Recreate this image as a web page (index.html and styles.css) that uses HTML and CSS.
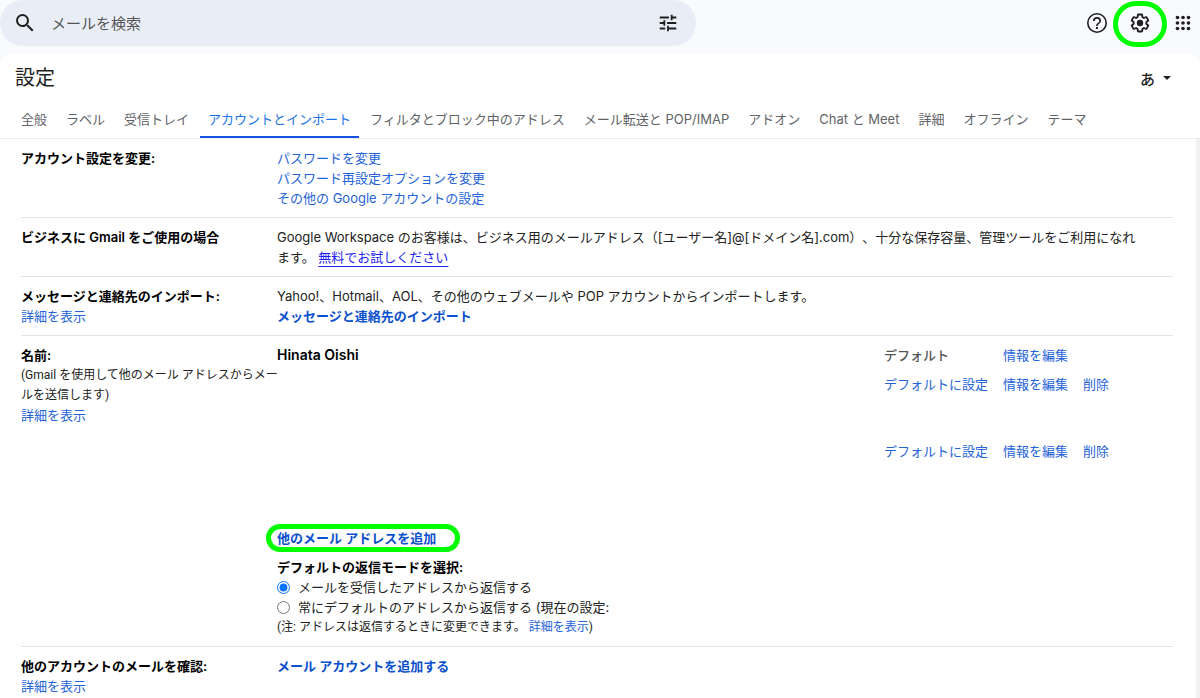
FILE: index.html
```
<!DOCTYPE html>
<html lang="ja">
<head>
  <meta charset="UTF-8" />
  <meta name="viewport" content="width=device-width, initial-scale=1.0"/>
  <title>設定 - アカウントとインポート</title>
  <link rel="stylesheet" href="styles.css">
</head>
<body>

  <!-- Top bar -->
  <header class="topbar">
    <form class="search" role="search">
      <button type="submit" class="icon-btn" aria-label="検索">
        <svg width="24" height="24" viewBox="0 0 24 24"><path d="M15.5 14h-.79l-.28-.27A6.47 6.47 0 0 0 16 9.5 6.5 6.5 0 1 0 9.5 16c1.61 0 3.09-.59 4.23-1.57l.27.28v.79l5 4.99L20.49 19l-4.99-5zm-6 0a4.5 4.5 0 1 1 0-9 4.5 4.5 0 0 1 0 9z"/></svg>
      </button>
      <input type="text" placeholder="メールを検索" aria-label="メールを検索" />
      <button type="button" class="icon-btn" aria-label="検索オプション">
        <svg width="22" height="22" viewBox="0 0 24 24"><path d="M3 17v2h6v-2H3zM3 5v2h10V5H3zm10 16v-2h8v-2h-8v-2h-2v6h2zM7 9v2H3v2h4v2h2V9H7zm14 4v-2H11v2h10zm-6-4h2V7h4V5h-4V3h-2v6z"/></svg>
      </button>
    </form>
    <div class="top-actions">
      <button type="button" class="icon-btn" aria-label="サポート">
        <svg width="24" height="24" viewBox="0 0 24 24"><path d="M11 18h2v-2h-2v2zm1-16a10 10 0 1 0 0 20 10 10 0 0 0 0-20zm0 18.400a8.400 8.400 0 1 1 0-16.800 8.400 8.400 0 0 1 0 16.800zm0-14.400a4 4 0 0 0-4 4h1.700a2.300 2.300 0 1 1 4.600 0c0 2-3.200 1.750-3.200 5h1.800c0-2.250 3.100-2.500 3.100-5a4 4 0 0 0-4-4z"/></svg>
      </button>
      <button type="button" class="icon-btn marked" aria-label="設定">
        <svg width="22" height="22" viewBox="0 0 24 24"><path d="M13.85 22.25h-3.7c-.74 0-1.36-.54-1.45-1.27l-.27-1.89c-.27-.14-.53-.29-.79-.46l-1.8.72c-.7.26-1.47-.03-1.81-.65L2.2 15.53c-.35-.66-.2-1.44.36-1.88l1.53-1.19c-.01-.15-.02-.3-.02-.46 0-.15.01-.31.02-.46l-1.52-1.19c-.59-.45-.74-1.26-.37-1.88l1.85-3.19c.34-.62 1.11-.9 1.79-.63l1.81.73c.26-.17.52-.32.78-.46l.27-1.91c.09-.7.71-1.25 1.44-1.25h3.7c.74 0 1.36.54 1.45 1.27l.27 1.89c.27.14.53.29.79.46l1.8-.72c.71-.26 1.48.03 1.82.65l1.84 3.18c.36.66.2 1.44-.36 1.88l-1.52 1.19c.01.15.02.3.02.46s-.01.31-.02.46l1.52 1.19c.56.45.72 1.23.37 1.86l-1.86 3.22c-.34.62-1.11.9-1.8.63l-1.8-.72c-.26.17-.52.32-.78.46l-.27 1.91c-.1.68-.72 1.22-1.46 1.22zm-3.23-2h2.76l.37-2.55.53-.22c.44-.18.88-.44 1.34-.78l.45-.34 2.38.96 1.38-2.4-2.03-1.58.07-.56c.03-.26.06-.51.06-.78s-.03-.53-.06-.78l-.07-.56 2.03-1.58-1.39-2.4-2.39.96-.45-.35c-.42-.32-.87-.58-1.33-.77l-.52-.22-.37-2.55h-2.76l-.37 2.55-.53.21c-.44.19-.88.44-1.34.79l-.45.33-2.38-.95-1.39 2.39 2.03 1.58-.07.56a7 7 0 0 0-.06.79c0 .26.02.53.06.78l.07.56-2.03 1.58 1.38 2.4 2.39-.96.45.35c.43.33.86.58 1.33.77l.53.22.38 2.55z"/><circle cx="12" cy="12" r="3.500"/></svg>
      </button>
      <button type="button" class="icon-btn" aria-label="アプリ">
        <svg width="22" height="22" viewBox="0 0 24 24"><circle cx="6" cy="6" r="2"/><circle cx="12" cy="6" r="2"/><circle cx="18" cy="6" r="2"/><circle cx="6" cy="12" r="2"/><circle cx="12" cy="12" r="2"/><circle cx="18" cy="12" r="2"/><circle cx="6" cy="18" r="2"/><circle cx="12" cy="18" r="2"/><circle cx="18" cy="18" r="2"/></svg>
      </button>
    </div>
  </header>

  <main class="panel">
    <div class="panel-header">
      <h1>設定</h1>
      <button type="button" class="lang-btn" aria-label="入力ツール">あ<span class="caret"></span></button>
    </div>

    <!-- Tabs -->
    <nav class="tabs">
      <a href="#general">全般</a>
      <a href="#labels">ラベル</a>
      <a href="#inbox">受信トレイ</a>
      <a href="#accounts" class="active">アカウントとインポート</a>
      <a href="#filters">フィルタとブロック中のアドレス</a>
      <a href="#fwdandpop">メール転送と POP/IMAP</a>
      <a href="#addons">アドオン</a>
      <a href="#chat">Chat と Meet</a>
      <a href="#advanced">詳細</a>
      <a href="#offline">オフライン</a>
      <a href="#themes">テーマ</a>
    </nav>

    <!-- Settings rows -->
    <div class="settings">
      <section class="row">
        <div><h2>アカウント設定を変更:</h2></div>
        <div class="links">
          <a href="#password">パスワードを変更</a>
          <a href="#recovery">パスワード再設定オプションを変更</a>
          <a href="#other">その他の Google アカウントの設定</a>
        </div>
      </section>

      <section class="row">
        <div><h2>ビジネスに Gmail をご使用の場合</h2></div>
        <p class="business">Google Workspace のお客様は、ビジネス用のメールアドレス（[ユーザー名]@[ドメイン名].com）、十分な保存容量、管理ツールをご利用になれます。 <a href="#workspace" class="trial">無料でお試しください</a></p>
      </section>

      <section class="row">
        <div>
          <h2>メッセージと連絡先のインポート:</h2>
          <a href="#import-help">詳細を表示</a>
        </div>
        <div>
          <p>Yahoo!、Hotmail、AOL、その他のウェブメールや POP アカウントからインポートします。</p>
          <a href="#import" class="strong">メッセージと連絡先のインポート</a>
        </div>
      </section>

      <section class="row">
        <div>
          <h2>名前:</h2>
          <p class="small hint">(Gmail を使用して他のメール アドレスからメー<br>ルを送信します)</p>
          <a href="#name-help">詳細を表示</a>
        </div>
        <div>
          <table class="senders">
            <tr class="first">
              <th scope="row">Hinata Oishi</th>
              <td class="status">デフォルト</td>
              <td class="edit"><a href="#edit1">情報を編集</a></td>
              <td class="delete"></td>
            </tr>
            <tr class="second">
              <th scope="row"></th>
              <td><a href="#default2">デフォルトに設定</a></td>
              <td><a href="#edit2">情報を編集</a></td>
              <td><a href="#delete2">削除</a></td>
            </tr>
            <tr class="third">
              <th scope="row"></th>
              <td><a href="#default3">デフォルトに設定</a></td>
              <td><a href="#edit3">情報を編集</a></td>
              <td><a href="#delete3">削除</a></td>
            </tr>
          </table>
          <div class="add"><a href="#add-address" class="strong marked">他のメール アドレスを追加</a></div>
          <fieldset>
            <legend>デフォルトの返信モードを選択:</legend>
            <label><input type="radio" name="reply" checked />メールを受信したアドレスから返信する</label>
            <label><input type="radio" name="reply" />常にデフォルトのアドレスから返信する (現在の設定:</label>
          </fieldset>
          <p class="small">(注: アドレスは返信するときに変更できます。 <a href="#reply-help">詳細を表示</a>)</p>
        </div>
      </section>

      <section class="row">
        <div>
          <h2>他のアカウントのメールを確認:</h2>
          <a href="#check-help">詳細を表示</a>
        </div>
        <div><a href="#add-account" class="strong">メール アカウントを追加する</a></div>
      </section>
    </div>
  </main>

</body>
</html>
```
FILE: styles.css
```
* {
  box-sizing: border-box;
}

body {
  margin: 0;
  height: 100vh;
  display: flex;
  flex-direction: column;
  overflow: hidden;
  font-family: Inter, "Noto Sans CJK JP", sans-serif;
  font-size: 13px;
  line-height: 20px;
  color: #222;
  background-color: #f8fafd;
  text-spacing-trim: space-all;
}

h1, h2, p {
  margin: 0;
}

a {
  color: #2563d8;
  text-decoration: none;
}

button, input {
  font-family: inherit;
}

/* Top bar */
.topbar {
  flex: none;
  display: flex;
  justify-content: space-between;
  height: 54px;
}

.search {
  display: flex;
  align-items: center;
  width: 58%;
  height: 46px;
  padding: 0 11px 0 8px;
  border-radius: 23px;
  background-color: #e9eef6;
}

.search input {
  flex: 1;
  min-width: 0;
  margin-left: 9px;
  padding: 0;
  border: none;
  outline: none;
  background: none;
  font-size: 15px;
}

.search input::placeholder {
  color: #555;
  opacity: 1;
}

.icon-btn {
  display: flex;
  align-items: center;
  justify-content: center;
  width: 34px;
  height: 34px;
  padding: 0;
  border: none;
  background: none;
  cursor: pointer;
}

.icon-btn svg {
  flex: none;
  fill: #1f1f1f;
}

.top-actions {
  display: flex;
  align-items: center;
  gap: 9px;
  height: 46px;
}

/* Green marker drawn round a control */
.marked {
  position: relative;
}

.marked::after {
  content: "";
  position: absolute;
  inset: -6px -24px -6px -11px;
  border: 5px solid #00ff00;
  border-radius: 16px;
  pointer-events: none;
}

.icon-btn.marked::after {
  inset: -5px -10px -7px;
  border-radius: 23px;
}

/* Panel */
.panel {
  flex: 1;
  min-height: 0;
  display: flex;
  flex-direction: column;
  background-color: #fff;
  border-radius: 12px 12px 0 0;
}

.panel-header {
  flex: none;
  display: flex;
  align-items: center;
  justify-content: space-between;
  height: 48px;
  padding: 0 29px 0 15px;
}

h1 {
  font-size: 20px;
  font-weight: 400;
  color: #1f1f1f;
}

.lang-btn {
  display: flex;
  align-items: center;
  gap: 8px;
  padding: 0;
  border: none;
  background: none;
  font-size: 15px;
  font-weight: 500;
  color: #222;
}

.caret {
  border: 4px solid transparent;
  border-top-color: #222;
  border-bottom: 0;
}

/* Tabs */
.tabs {
  flex: none;
  display: flex;
  gap: 3px;
  padding-left: 13px;
  border-bottom: 1px solid #ebebeb;
}

.tabs a {
  height: 36px;
  padding: 7px 8px 0;
  color: #5f6368;
  white-space: nowrap;
}

.tabs a.active {
  color: #1a73e8;
  border-bottom: 2px solid #1a50e0;
}

/* Settings */
.settings {
  flex: 1;
  min-height: 0;
  overflow: hidden;
  padding: 0 23px 0 21px;
  border-right: 4px solid #f1f1f1;
}

.row {
  display: grid;
  grid-template-columns: 256px 1fr;
  padding: 9px 0;
  border-bottom: 1px solid #e3e3e3;
}

h2, legend {
  font-size: 13px;
  font-weight: 600;
  color: #000;
}

.links {
  display: flex;
  flex-direction: column;
  align-items: flex-start;
}

.business {
  padding-right: 32px;
}

.trial {
  color: #1f1fee;
  text-decoration: underline;
  text-underline-offset: 4px;
}

.strong {
  font-weight: 600;
  color: #0b50cc;
}

.small {
  font-family: Roboto, "Noto Sans CJK JP", sans-serif;
  font-size: 12px;
}

.hint {
  white-space: nowrap;
}

/* Sender list */
.senders {
  width: 100%;
  border-collapse: collapse;
  table-layout: fixed;
}

.senders th, .senders td {
  padding: 0;
  text-align: left;
  vertical-align: top;
}

.senders th {
  font-size: 14px;
  font-weight: 600;
  color: #000;
}

.senders .status {
  width: 119px;
  font-weight: 500;
  color: #555;
}

.edit {
  width: 80px;
}

.delete {
  width: 90px;
}

.first {
  height: 29px;
}

.second {
  height: 67px;
}

.third {
  height: 87px;
}

.add {
  margin-bottom: 9px;
}

/* Reply mode */
fieldset {
  margin: 0;
  padding: 0;
  border: none;
}

legend {
  padding: 0;
}

fieldset label {
  display: flex;
  align-items: center;
  gap: 8px;
}

fieldset input {
  width: 13px;
  height: 13px;
  margin: 0;
  accent-color: #0a75ff;
}
```
